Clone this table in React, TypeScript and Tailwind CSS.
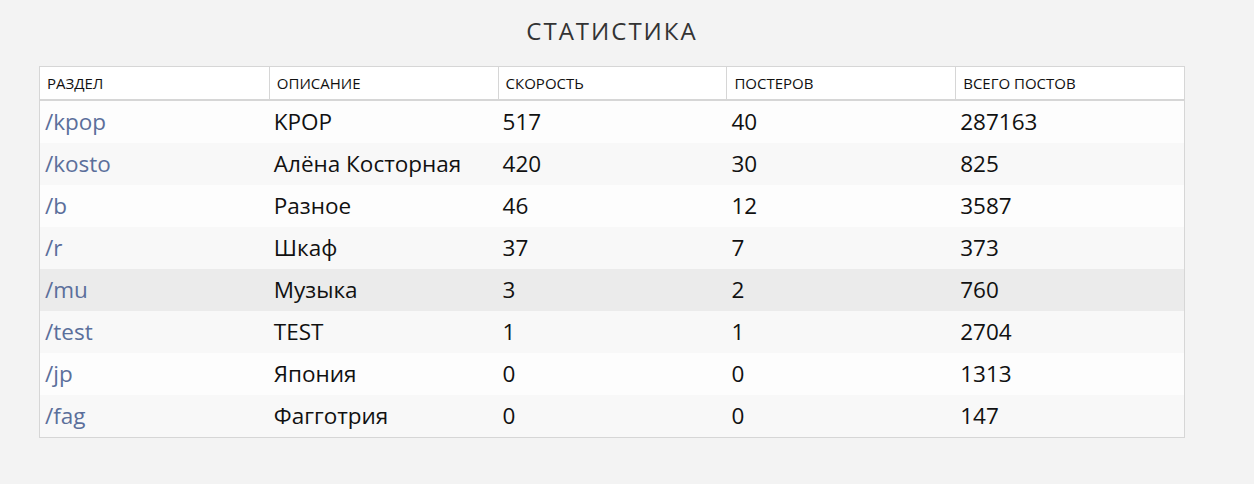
const rows = [
  { path: "/kpop", desc: "KPOP", speed: 517, posters: 40, total: 287163 },
  { path: "/kosto", desc: "Алёна Косторная", speed: 420, posters: 30, total: 825 },
  { path: "/b", desc: "Разное", speed: 46, posters: 12, total: 3587 },
  { path: "/r", desc: "Шкаф", speed: 37, posters: 7, total: 373 },
  { path: "/mu", desc: "Музыка", speed: 3, posters: 2, total: 760 },
  { path: "/test", desc: "TEST", speed: 1, posters: 1, total: 2704 },
  { path: "/jp", desc: "Япония", speed: 0, posters: 0, total: 1313 },
  { path: "/fag", desc: "Фагготрия", speed: 0, posters: 0, total: 147 },
]

const heads = ["Раздел", "Описание", "Скорость", "Постеров", "Всего постов"]

export default function App() {
  return (
    <div className="min-h-[484px] bg-[#f3f3f3] pt-[16px] font-['Open_Sans',sans-serif] text-[#111]">
      <div className="ml-[39px] w-[1146px]">
        <h1 className="text-center text-[24px] leading-[30px] tracking-[2px] uppercase text-[#333]">Статистика</h1>
        <table className="mt-[20px] w-full table-fixed border-separate border-spacing-0 border border-[#d6d6d6]">
          <thead>
            <tr className="bg-white">
              {heads.map((h, i) => (
                <th
                  key={h}
                  className={`h-[34px] px-[7px] py-0 text-left text-[15px] font-normal uppercase border-b-2 border-[#d6d6d6] ${i > 0 ? "border-l" : ""}`}
                >
                  {h}
                </th>
              ))}
            </tr>
          </thead>
          <tbody>
            {rows.map((r, i) => (
              <tr
                key={r.path}
                className={r.path === "/mu" ? "bg-[#ebebeb]" : i % 2 === 0 ? "bg-[#fdfdfd]" : "bg-[#f8f8f8]"}
              >
                <td className="h-[42px] px-[5px] py-0 text-[22.5px] leading-[30px] text-[#5b6f9b]">{r.path}</td>
                <td className="px-[5px] py-0 text-[22.5px] leading-[30px]">{r.desc}</td>
                <td className="px-[5px] py-0 text-[22.5px] leading-[30px]">{r.speed}</td>
                <td className="px-[5px] py-0 text-[22.5px] leading-[30px]">{r.posters}</td>
                <td className="px-[5px] py-0 text-[22.5px] leading-[30px]">{r.total}</td>
              </tr>
            ))}
          </tbody>
        </table>
      </div>
    </div>
  )
}
